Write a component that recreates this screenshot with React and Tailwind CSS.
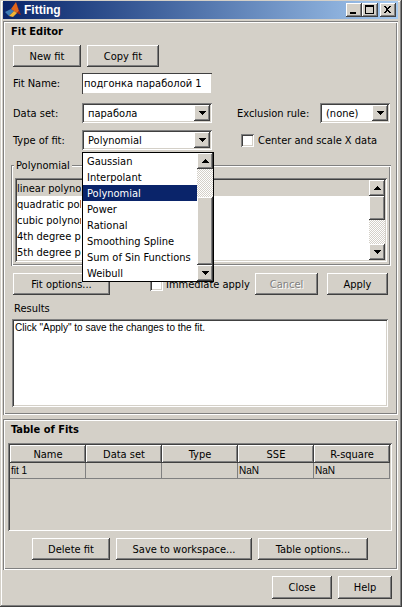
import React from "react";

const raised =
  "bg-[#d4d0c8] shadow-[inset_-1px_-1px_0_#404040,inset_1px_1px_0_#ffffff,inset_-2px_-2px_0_#808080]";
const sunken =
  "shadow-[inset_1px_1px_0_#808080,inset_-1px_-1px_0_#ffffff,inset_2px_2px_0_#404040,inset_-2px_-2px_0_#d4d0c8]";
const etched =
  "shadow-[inset_1px_1px_0_#808080,inset_-1px_-1px_0_#ffffff,inset_2px_2px_0_#ffffff,inset_-2px_-2px_0_#808080]";
const track =
  "bg-[repeating-conic-gradient(#ffffff_0%_25%,#d4d0c8_0%_50%)] bg-[length:2px_2px]";

function Button({ className = "", disabled, children }) {
  return (
    <div
      className={`${raised} flex items-center justify-center whitespace-nowrap ${
        disabled ? "text-[#808080] [text-shadow:1px_1px_0_#ffffff]" : ""
      } ${className}`}
    >
      {children}
    </div>
  );
}

function Arrow({ up }) {
  return (
    <svg width="7" height="4" viewBox="0 0 7 4" shapeRendering="crispEdges">
      <path d={up ? "M3.5 0L7 4H0Z" : "M0 0H7L3.5 4Z"} fill="#000" />
    </svg>
  );
}

function ScrollBtn({ up }) {
  return (
    <div className={`${raised} w-[16px] h-[16px] shrink-0 flex items-center justify-center`}>
      <Arrow up={up} />
    </div>
  );
}

function Select({ value, className = "" }) {
  return (
    <div className={`${sunken} bg-white flex items-center p-[2px] ${className}`}>
      <span className="flex-1 pl-[4px] whitespace-nowrap overflow-hidden">{value}</span>
      <ScrollBtn />
    </div>
  );
}

function Checkbox({ className = "" }) {
  return <div className={`${sunken} bg-white w-[13px] h-[13px] shrink-0 ${className}`} />;
}

function Logo() {
  return (
    <svg width="16" height="16" viewBox="0 0 16 16">
      <path d="M0 10L6 7L9 9L4 14Z" fill="#3f7cb5" />
      <path d="M6 7L11 0L14 9L12 11L9 9Z" fill="#e2661c" />
      <path d="M11 0L16 13L12 11L14 9Z" fill="#a3200f" />
      <path d="M4 14L9 9L12 11L8 15Z" fill="#f2b233" />
    </svg>
  );
}

function TitleBtn({ kind }) {
  return (
    <div className={`${raised} w-[16px] h-[14px] flex`}>
      <svg width="16" height="14" viewBox="0 0 16 14" shapeRendering="crispEdges">
        {kind === "min" && <rect x="4" y="9" width="6" height="2" fill="#000" />}
        {kind === "max" && (
          <path d="M3 2h9v9H3zM4 4v6h7V4z" fill="#000" fillRule="evenodd" />
        )}
        {kind === "close" && (
          <path
            d="M4 3h2l1.5 2 1.5-2h2l-2.5 3.5 2.5 3.5h-2L7.5 8 6 10H4l2.5-3.5z"
            fill="#000"
          />
        )}
      </svg>
    </div>
  );
}

export default function App() {
  const fitTypes = [
    "Gaussian",
    "Interpolant",
    "Polynomial",
    "Power",
    "Rational",
    "Smoothing Spline",
    "Sum of Sin Functions",
    "Weibull",
  ];
  const polys = [
    "linear polynomial",
    "quadratic polynomial",
    "cubic polynomial",
    "4th degree polynomial",
    "5th degree polynomial",
  ];
  const cols = ["Name", "Data set", "Type", "SSE", "R-square"];
  const row = ["fit 1", "", "", "NaN", "NaN"];

  return (
    <div className="relative w-[402px] h-[607px] overflow-hidden bg-[#d4d0c8] text-black text-[11px] leading-[13px] font-['DejaVu_Sans_Condensed','Liberation_Sans',sans-serif] shadow-[inset_-1px_-1px_0_#404040,inset_1px_1px_0_#d4d0c8,inset_-2px_-2px_0_#808080,inset_2px_2px_0_#ffffff]">
      <div className="flex flex-col pl-[3px] pr-[4px]">
        {/* Title bar */}
        <div className="mt-[1px] h-[18px] flex items-center px-[2px] bg-linear-to-r from-[#0a246a] to-[#a6caf0]">
          <Logo />
          <span className="ml-[3px] text-white font-bold text-[12px] font-['Liberation_Sans',sans-serif]">
            Fitting
          </span>
          <div className="ml-auto flex items-center">
            <TitleBtn kind="min" />
            <TitleBtn kind="max" />
            <div className="ml-[2px]">
              <TitleBtn kind="close" />
            </div>
          </div>
        </div>

        {/* Fit Editor */}
        <div className={`${etched} mt-[2px] h-[394px] flex flex-col`}>
          <div className="pt-[4px] pl-[8px] font-bold">Fit Editor</div>
          <div className="mt-[7px] ml-[10px] flex gap-[6px]">
            <Button className="w-[68px] h-[22px]">New fit</Button>
            <Button className="w-[72px] h-[22px]">Copy fit</Button>
          </div>

          <div className="mt-[6px] ml-[10px] h-[21px] flex items-center">
            <span className="w-[69px]">Fit Name:</span>
            <div className="w-[130px] h-[21px] bg-white flex items-center pl-[2px] shadow-[inset_1px_1px_0_#404040,inset_-1px_-1px_0_#d4d0c8]">
              подгонка параболой 1
            </div>
          </div>

          <div className="mt-[9px] ml-[10px] h-[20px] flex items-center">
            <span className="w-[69px]">Data set:</span>
            <Select className="w-[130px] h-[20px]" value="парабола" />
            <span className="ml-[25px] w-[83px]">Exclusion rule:</span>
            <Select className="w-[70px] h-[20px]" value="(none)" />
          </div>

          <div className="mt-[7px] ml-[10px] h-[20px] flex items-center">
            <span className="w-[69px]">Type of fit:</span>
            <Select className="w-[130px] h-[20px]" value="Polynomial" />
            <Checkbox className="ml-[29px]" />
            <span className="ml-[4px]">Center and scale X data</span>
          </div>

          {/* Polynomial group */}
          <div className={`${etched} relative mt-[15px] ml-[8px] w-[380px] h-[101px] pt-[13px] pl-[4px]`}>
            <span className="absolute left-[3px] -top-[6px] px-[2px] bg-[#d4d0c8]">Polynomial</span>
            <div className={`${sunken} bg-white w-[372px] h-[84px] p-[2px] flex`}>
              <div className="flex-1 flex flex-col overflow-hidden">
                {polys.map((p, i) => (
                  <div
                    key={p}
                    className={`h-[16px] flex items-center ${i === 0 ? "bg-[#d4d0c8]" : ""}`}
                  >
                    {/* the rest of the row lies under the open dropdown */}
                    <span className="w-[64px] overflow-hidden whitespace-nowrap">{p}</span>
                  </div>
                ))}
              </div>
              <div className="w-[16px] flex flex-col">
                <ScrollBtn up />
                <div className={`${raised} h-[24px]`} />
                <div className={`${track} h-[24px]`} />
                <ScrollBtn />
              </div>
            </div>
          </div>

          <div className="mt-[7px] ml-[10px] h-[22px] flex items-center">
            <Button className="w-[97px] h-[22px]">Fit options...</Button>
            <div className="ml-[40px] w-[105px] flex items-center">
              <Checkbox />
              <span className="ml-[3px]">Immediate apply</span>
            </div>
            <Button className="w-[63px] h-[22px]" disabled>
              Cancel
            </Button>
            <Button className="ml-[9px] w-[61px] h-[22px]">Apply</Button>
          </div>

          <div className="mt-[7px] pl-[11px]">Results</div>
          <div className={`${sunken} bg-white mt-[4px] ml-[9px] w-[376px] h-[88px] px-[3px] py-[3px] text-[10px] leading-[12px] font-['Liberation_Sans',sans-serif]`}>
            Click "Apply" to save the changes to the fit.
          </div>
        </div>

        {/* Table of Fits */}
        <div className={`${etched} mt-[4px] h-[151px] flex flex-col`}>
          <div className="pt-[4px] pl-[8px] font-bold">Table of Fits</div>
          <div className={`${sunken} mt-[7px] ml-[5px] w-[384px] h-[88px] p-[2px]`}>
            <div className="flex h-[18px]">
              {cols.map((c) => (
                <div key={c} className={`${raised} w-[76px] flex items-center justify-center`}>
                  {c}
                </div>
              ))}
            </div>
            <div className="flex h-[16px] text-[10px] font-['Liberation_Sans',sans-serif]">
              {row.map((v, i) => (
                <div
                  key={i}
                  className="w-[76px] border-r border-b border-[#808080] pl-[1px] flex items-center"
                >
                  {v}
                </div>
              ))}
            </div>
          </div>
          <div className="mt-[7px] ml-[29px] flex gap-[6px]">
            <Button className="w-[78px] h-[22px]">Delete fit</Button>
            <Button className="w-[136px] h-[22px]">Save to workspace...</Button>
            <Button className="w-[110px] h-[22px]">Table options...</Button>
          </div>
        </div>

        <div className="mt-[6px] pr-[6px] flex justify-end gap-[6px]">
          <Button className="w-[60px] h-[23px]">Close</Button>
          <Button className="w-[54px] h-[23px]">Help</Button>
        </div>
      </div>

      {/* Open dropdown list */}
      <div className="absolute left-[82px] top-[152px] w-[132px] h-[130px] border border-black bg-white flex">
        <div className="flex-1 flex flex-col">
          {fitTypes.map((t) => (
            <div
              key={t}
              className={`h-[16px] pl-[4px] flex items-center whitespace-nowrap ${
                t === "Polynomial" ? "bg-[#0a246a] text-white" : ""
              }`}
            >
              {t}
            </div>
          ))}
        </div>
        <div className="w-[16px] flex flex-col">
          <ScrollBtn up />
          <div className={`${track} h-[28px]`} />
          <div className={`${raised} h-[68px]`} />
          <ScrollBtn />
        </div>
      </div>
    </div>
  );
}
